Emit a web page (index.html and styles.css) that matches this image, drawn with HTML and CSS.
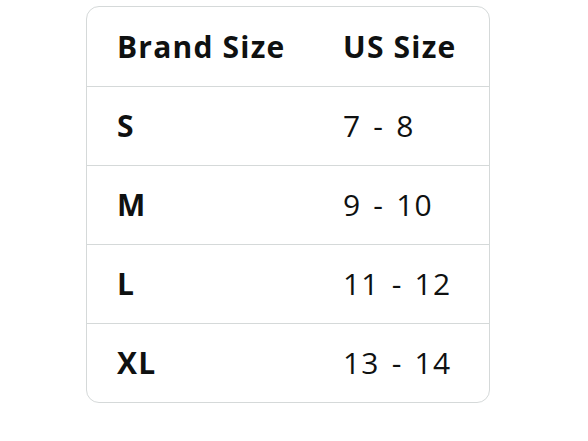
FILE: index.html
```html
<!DOCTYPE html>
<html>
<head>
<meta charset="utf-8">
<link rel="stylesheet" href="styles.css">
</head>
<body>
<div class="chart">
  <div class="row head">
    <div class="cell">Brand Size</div>
    <div class="cell">US Size</div>
  </div>
  <div class="row">
    <div class="cell label">S</div>
    <div class="cell value">7 - 8</div>
  </div>
  <div class="row">
    <div class="cell label">M</div>
    <div class="cell value">9 - 10</div>
  </div>
  <div class="row">
    <div class="cell label">L</div>
    <div class="cell value">11 - 12</div>
  </div>
  <div class="row">
    <div class="cell label">XL</div>
    <div class="cell value">13 - 14</div>
  </div>
</div>
</body>
</html>
```
FILE: styles.css
```css
html, body {
  margin: 0;
  background: #ffffff;
}
body {
  padding: 6px 0 0 86px;
  font-family: "Open Sans", "Noto Sans", sans-serif;
  color: #0f1111;
}
.chart {
  width: 402px;
  border: 1px solid #d5d9d9;
  border-radius: 13px;
  overflow: hidden;
}
.row {
  display: grid;
  grid-template-columns: 226px 1fr;
  height: 78px;
  align-items: center;
  border-top: 1px solid #d5d9d9;
}
.row.head {
  border-top: none;
  height: 79px;
  font-weight: 700;
}
.cell {
  padding-left: 30px;
  font-size: 30px;
  line-height: 1;
  letter-spacing: 1.2px;
}
.label {
  font-weight: 700;
}
.value {
  word-spacing: 3px;
}
```
